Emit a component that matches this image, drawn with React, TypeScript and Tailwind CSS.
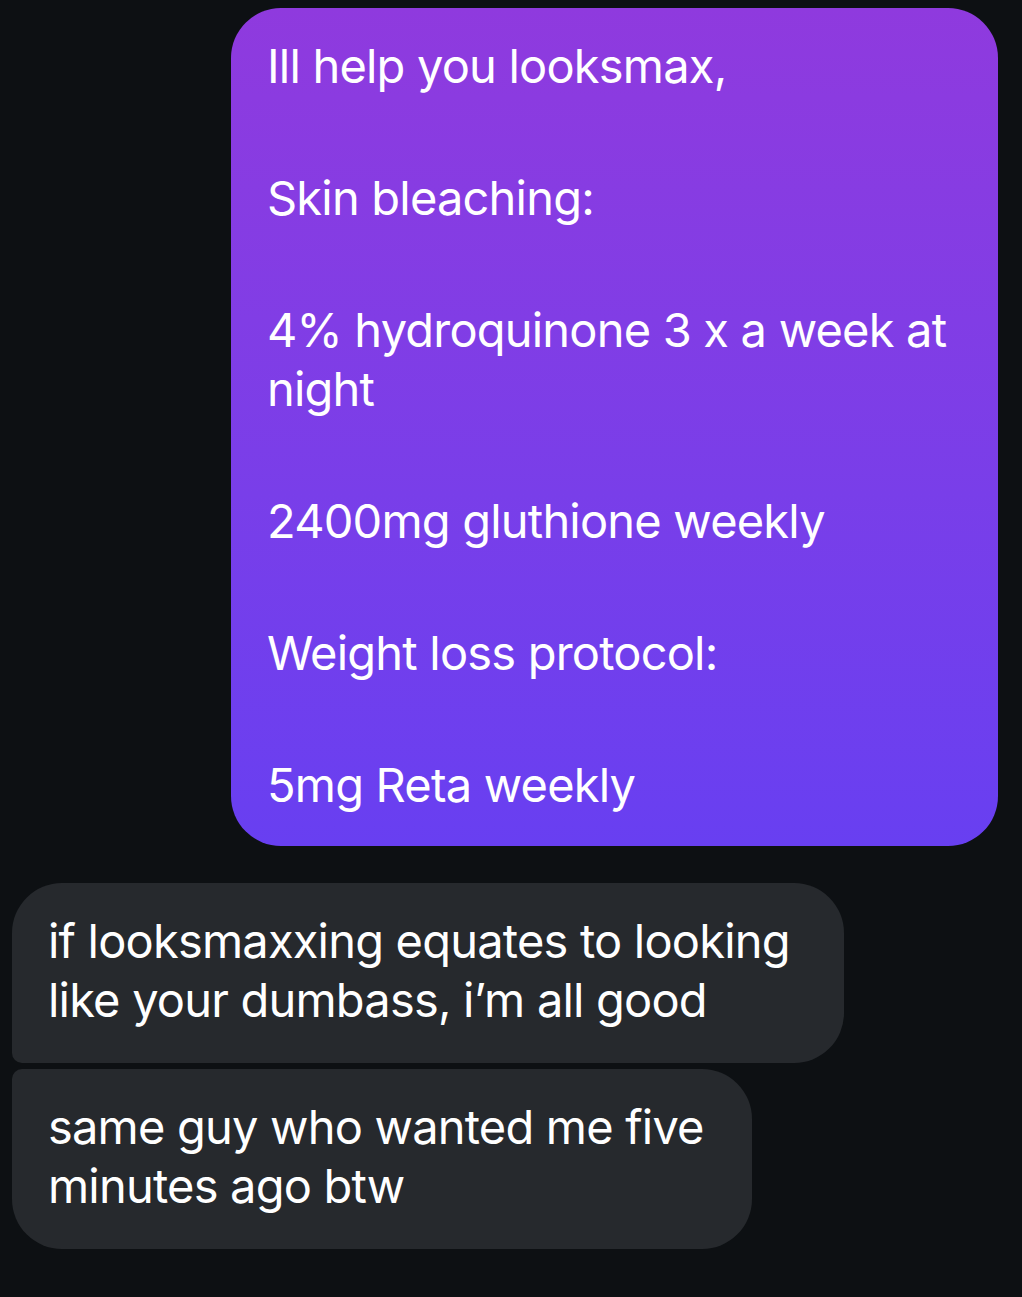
import React from 'react';

const font = { fontFamily: 'Inter, "Noto Sans", sans-serif' };

export default function App() {
  return (
    <div className="min-h-[1297px] w-[1022px] bg-[#0d1013] text-white" style={font}>
      {/* sent */}
      <div className="flex justify-end pt-[8px] pr-[24px]">
        <div className="w-[767px] rounded-[50px] bg-gradient-to-b from-[#8f3ade] to-[#683ff1] pl-[36px] pr-[20px] pt-[28px] pb-[32px] text-[47px] leading-[59px] tracking-[-0.8px] whitespace-nowrap">
          <div className="flex flex-col gap-[73px]">
            <p>Ill help you looksmax,</p>
            <p>Skin bleaching:</p>
            <p>
              4% hydroquinone 3 x a week at
              <br />
              night
            </p>
            <p>2400mg gluthione weekly</p>
            <p>Weight loss protocol:</p>
            <p>5mg Reta weekly</p>
          </div>
        </div>
      </div>

      {/* received */}
      <div className="mt-[37px] flex flex-col items-start gap-[6px] pl-[12px]">
        <div className="w-[832px] rounded-[50px] rounded-bl-[10px] bg-[#26292d] pl-[36px] pr-[20px] pt-[28px] pb-[34px] text-[47px] leading-[59px] tracking-[-0.8px] whitespace-nowrap">
          <p>
            if looksmaxxing equates to looking
            <br />
            like your dumbass, i’m all good
          </p>
        </div>
        <div className="w-[740px] rounded-[50px] rounded-tl-[10px] bg-[#26292d] pl-[36px] pr-[20px] pt-[28px] pb-[34px] text-[47px] leading-[59px] tracking-[-0.8px] whitespace-nowrap">
          <p>
            same guy who wanted me five
            <br />
            minutes ago btw
          </p>
        </div>
      </div>
    </div>
  );
}
